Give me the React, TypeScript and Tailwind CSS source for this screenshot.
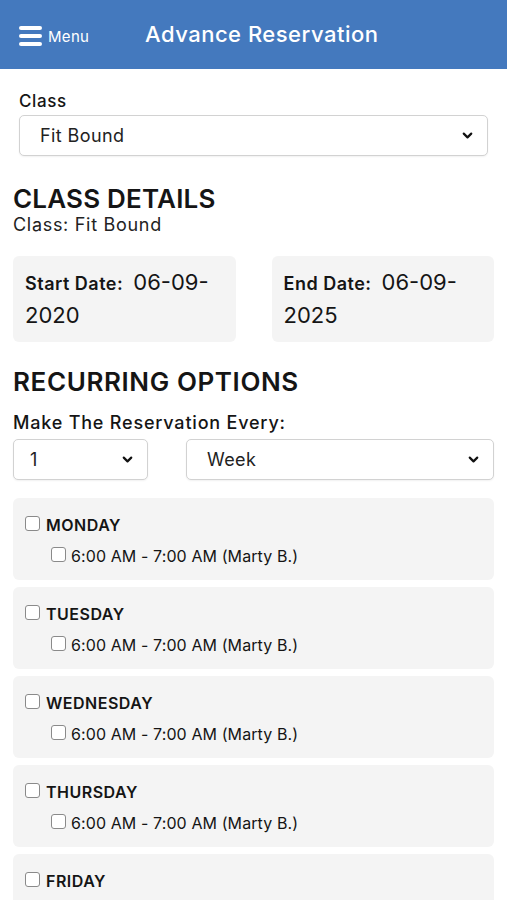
import { ChevronDown } from 'lucide-react'

const days = ['MONDAY', 'TUESDAY', 'WEDNESDAY', 'THURSDAY', 'FRIDAY']

function Box({ className = '' }: { className?: string }) {
    return <span className={`inline-block w-[15px] h-[15px] shrink-0 rounded-[3px] border border-[#8a8a8a] bg-white ${className}`} />
}

function Select({ value, className = '' }: { value: string; className?: string }) {
    return (
        <div className={`flex items-center justify-between h-[41px] rounded-[5px] border border-[#d2d2d2] bg-white pl-5 pr-3 shadow-[0_1px_2px_rgba(0,0,0,0.06)] ${className}`}>
            <span className="text-[18px] tracking-[0.4px] text-[#222]">{value}</span>
            <ChevronDown className="w-[15px] h-[15px] text-[#111]" strokeWidth={3.5} />
        </div>
    )
}

export default function App() {
    return (
        <div className="min-h-[900px] bg-white text-[#151515] font-['Inter','Noto_Sans',sans-serif]">
            {/* top bar */}
            <div className="h-[69px] bg-[#4479be] flex items-center px-[19px]">
                <div className="flex items-center gap-[6px] w-[126px] pt-[2px]">
                    <div className="flex flex-col gap-[4px] w-[23px]">
                        <span className="h-[4px] bg-white rounded-sm" />
                        <span className="h-[4px] bg-white rounded-sm" />
                        <span className="h-[4px] bg-white rounded-sm" />
                    </div>
                    <span className="text-white text-[15px] tracking-[0.3px] mt-[3px]">Menu</span>
                </div>
                <h1 className="text-white text-[22px] font-medium tracking-[0.5px]">Advance Reservation</h1>
            </div>

            <div className="px-[13px]">
                <div className="px-[6px] pt-[21px]">
                    <label className="block text-[17px] font-medium tracking-[0.6px] leading-[22px]">Class</label>
                    <Select value="Fit Bound" className="mt-[3px]" />
                </div>

                <h2 className="mt-[27px] text-[26px] font-semibold leading-[32px] tracking-[0.2px]">CLASS DETAILS</h2>
                <p className="text-[18px] tracking-[0.7px] leading-[20px] text-[#222]">Class: Fit Bound</p>

                <div className="mt-[21px] grid grid-cols-2 gap-[36px]">
                    <div className="h-[86px] rounded-[6px] bg-[#f4f4f4] px-[12px] pt-[11px]">
                        <p className="leading-[31px]"><span className="text-[18px] font-semibold tracking-[0.5px] mr-[10px]">Start Date:</span><span className="text-[22px]">06-09-</span></p>
                        <p className="text-[22px] leading-[31px]">2020</p>
                    </div>
                    <div className="h-[86px] rounded-[6px] bg-[#f4f4f4] px-[12px] pt-[11px]">
                        <p className="leading-[31px]"><span className="text-[18px] font-semibold tracking-[0.5px] mr-[10px]">End Date:</span><span className="text-[22px]">06-09-</span></p>
                        <p className="text-[22px] leading-[31px]">2025</p>
                    </div>
                </div>

                <h2 className="mt-[24px] text-[26px] font-semibold leading-[32px] tracking-[0.6px]">RECURRING OPTIONS</h2>
                <p className="mt-[14px] text-[18px] font-medium tracking-[0.8px] leading-[22px]">Make The Reservation Every:</p>
                <div className="mt-[5px] flex gap-[38px]">
                    <Select value="1" className="w-[135px] pl-[16px]" />
                    <Select value="Week" className="flex-1" />
                </div>

                <div className="mt-[18px] flex flex-col gap-[7px]">
                    {days.map(d => (
                        <div key={d} className="h-[82px] rounded-[6px] bg-[#f4f4f4] px-[12px] pt-[17px]">
                            <div className="flex items-center gap-[6px]">
                                <Box className="-mt-[4px]" />
                                <span className="text-[16px] font-semibold tracking-[0.5px] leading-[20px]">{d}</span>
                            </div>
                            <div className="mt-[11px] ml-[26px] flex items-center gap-[5px]">
                                <Box className="-mt-[4px]" />
                                <span className="text-[16px] tracking-[0.1px] leading-[20px]">6:00 AM - 7:00 AM (Marty B.)</span>
                            </div>
                        </div>
                    ))}
                </div>
            </div>
        </div>
    )
}
